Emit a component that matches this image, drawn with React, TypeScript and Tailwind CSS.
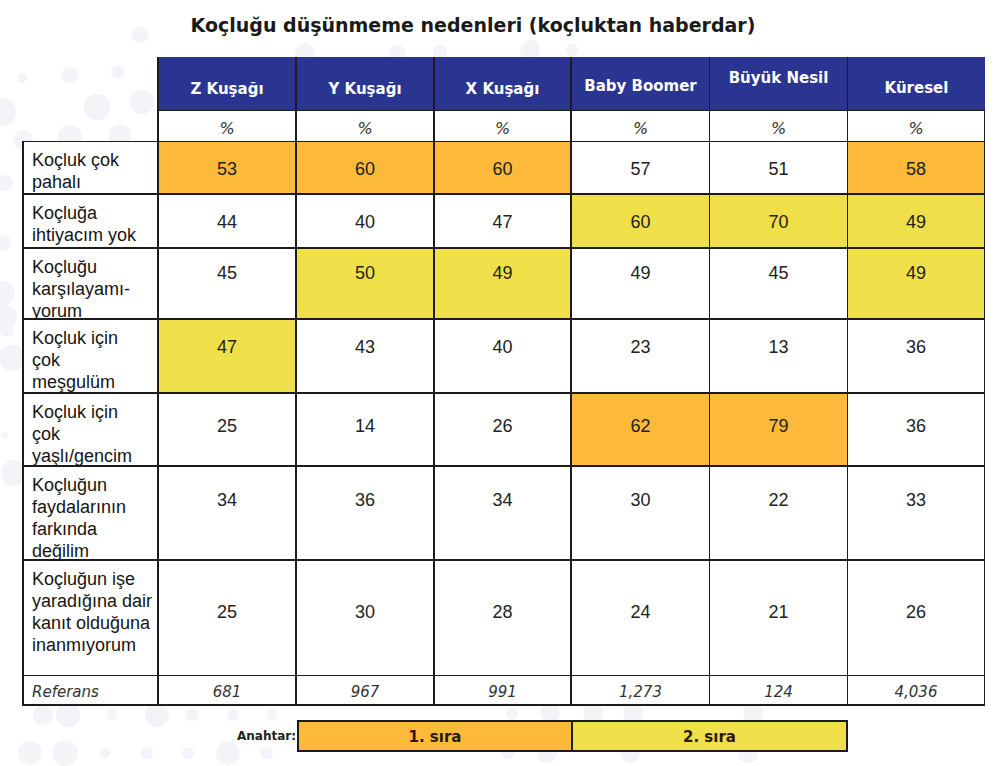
import React from "react";

type Row = { label: string[]; vals: number[]; hl: string[]; pt: number; h: number };

const rows: Row[] = [
  { label: ["Koçluk çok", "pahalı"], vals: [53, 60, 60, 57, 51, 58], hl: ["o", "o", "o", "", "", "o"], pt: 16, h: 53 },
  { label: ["Koçluğa", "ihtiyacım yok"], vals: [44, 40, 47, 60, 70, 49], hl: ["", "", "", "y", "y", "y"], pt: 16, h: 54 },
  { label: ["Koçluğu", "karşılayamı-", "yorum"], vals: [45, 50, 49, 49, 45, 49], hl: ["", "y", "y", "", "", "y"], pt: 13, h: 71 },
  { label: ["Koçluk için", "çok", "meşgulüm"], vals: [47, 43, 40, 23, 13, 36], hl: ["y", "", "", "", "", ""], pt: 16, h: 74 },
  { label: ["Koçluk için", "çok", "yaşlı/gencim"], vals: [25, 14, 26, 62, 79, 36], hl: ["", "", "", "o", "o", ""], pt: 21, h: 73 },
  { label: ["Koçluğun", "faydalarının", "farkında", "değilim"], vals: [34, 36, 34, 30, 22, 33], hl: ["", "", "", "", "", ""], pt: 22, h: 94 },
  { label: ["Koçluğun işe", "yaradığına dair", "kanıt olduğuna", "inanmıyorum"], vals: [25, 30, 28, 24, 21, 26], hl: ["", "", "", "", "", ""], pt: 40, h: 115 },
];

const headers = [
  { t: "Z Kuşağı", pt: 22 },
  { t: "Y Kuşağı", pt: 22 },
  { t: "X Kuşağı", pt: 22 },
  { t: "Baby Boomer", pt: 19 },
  { t: "Büyük Nesil", pt: 11 },
  { t: "Küresel", pt: 21 },
];

const refs = ["681", "967", "991", "1,273", "124", "4,036"];

const colR = ["border-r-2", "border-r-2", "border-r-2", "border-r-2", "border-r", "border-r", "border-r"];

const dots: [number, number, number][] = [
  [140, 35, 8], [22, 78, 5], [70, 75, 8], [118, 72, 7], [2, 112, 14], [97, 107, 13], [142, 102, 12],
  [23, 140, 10], [70, 137, 12], [120, 135, 11], [5, 183, 8], [3, 243, 8], [3, 293, 12], [5, 317, 12],
  [7, 330, 7], [12, 358, 13], [5, 435, 3], [14, 473, 13], [305, 53, 10], [397, 53, 8], [440, 52, 7],
  [530, 50, 10], [572, 50, 6],
  [43, 715, 10], [68, 715, 12], [112, 715, 5], [157, 715, 12], [192, 715, 6], [233, 715, 6], [272, 715, 5],
  [30, 753, 12], [65, 753, 13], [105, 753, 5], [147, 753, 6], [188, 753, 6], [228, 753, 12], [267, 753, 6],
  [512, 713, 6], [550, 713, 10], [593, 713, 10], [633, 713, 10], [753, 713, 10],
  [508, 753, 6], [547, 753, 10], [630, 753, 10], [748, 753, 10],
];

export default function App() {
  return (
    <div className="relative w-[1005px] h-[766px] overflow-hidden bg-white text-[#1c1c1c]">
      {dots.map(([x, y, r], i) => (
        <div
          key={i}
          className="absolute rounded-full bg-[#f3f3f8]"
          style={{ left: x - r, top: y - r, width: r * 2, height: r * 2 }}
        />
      ))}
      <div className="relative flex flex-col">
        <div className="w-[946px] h-[57px] pt-[13px] text-center text-[19px] leading-[24px] font-bold font-['DejaVu_Sans',sans-serif] text-[#1a1a1a]">
          Koçluğu düşünmeme nedenleri (koçluktan haberdar)
        </div>
        <div className="ml-[22px] grid grid-cols-[137px_138px_138px_137px_138px_138px_137px] grid-rows-[54px_31px_53px_54px_71px_74px_73px_94px_115px_30px] border-[#1c1c1c]">
          <div className="row-span-2 border-r-2 border-b border-[#1c1c1c]" />
          {headers.map((h, i) => (
            <div
              key={h.t}
              className={`${i < 5 ? (i < 3 ? "border-r-2" : "border-r") : ""} border-b border-[#1c1c1c] bg-[#2a3591] text-white text-center text-[15px] leading-[20px] font-bold font-['DejaVu_Sans',sans-serif]`}
              style={{ paddingTop: h.pt }}
            >
              {h.t}
            </div>
          ))}
          {headers.map((h, i) => (
            <div
              key={"p" + h.t}
              className={`${colR[i + 1]} border-b border-[#1c1c1c] bg-white text-center pt-[8px] text-[16px] leading-[20px] italic font-['DejaVu_Sans',sans-serif] text-[#333]`}
            >
              %
            </div>
          ))}
          {rows.map((r, ri) => (
            <React.Fragment key={ri}>
              <div
                className={`border-l-2 ${colR[0]} ${ri === 6 ? "border-b" : "border-b-2"} border-[#1c1c1c] bg-white pl-[8px] pt-[7px] text-[18px] leading-[22px] font-['Liberation_Sans',Arial,sans-serif] text-[#151515]`}
              >
                {r.label.map((l, li) => (
                  <div key={li} className="whitespace-nowrap">
                    {l}
                  </div>
                ))}
              </div>
              {r.vals.map((v, vi) => (
                <div
                  key={vi}
                  className={`${colR[vi + 1]} ${ri === 6 ? "border-b" : "border-b-2"} border-[#1c1c1c] ${
                    r.hl[vi] === "o" ? "bg-[#fdb93a]" : r.hl[vi] === "y" ? "bg-[#efe04a]" : "bg-white"
                  } text-center text-[18px] leading-[22px] font-['Liberation_Sans',Arial,sans-serif] text-[#222]`}
                  style={{ paddingTop: r.pt }}
                >
                  {v}
                </div>
              ))}
            </React.Fragment>
          ))}
          <div className="border-l-2 border-r-2 border-b-2 border-[#1c1c1c] bg-white pl-[8px] pt-[6px] text-[15px] leading-[20px] italic font-['DejaVu_Sans',sans-serif] text-[#333]">
            Referans
          </div>
          {refs.map((v, i) => (
            <div
              key={v}
              className={`${colR[i + 1]} border-b-2 border-[#1c1c1c] bg-white text-center pt-[6px] text-[15px] leading-[20px] italic font-['DejaVu_Sans',sans-serif] text-[#333]`}
            >
              {v}
            </div>
          ))}
        </div>
        <div className="mt-[14px] flex items-center">
          <div className="w-[297px] pr-[1px] text-right text-[12px] font-bold font-['DejaVu_Sans',sans-serif] text-[#222]">
            Anahtar:
          </div>
          <div className="w-[276px] h-[32px] border-2 border-[#1c1c1c] bg-[#fdb93a] flex items-center justify-center pt-[2px] text-[15px] font-bold font-['DejaVu_Sans',sans-serif] text-[#2a1a00]">
            1. sıra
          </div>
          <div className="w-[275px] h-[32px] border-2 border-l-0 border-[#1c1c1c] bg-[#efe04a] flex items-center justify-center pt-[2px] text-[15px] font-bold font-['DejaVu_Sans',sans-serif] text-[#2a1a00]">
            2. sıra
          </div>
        </div>
      </div>
    </div>
  );
}
